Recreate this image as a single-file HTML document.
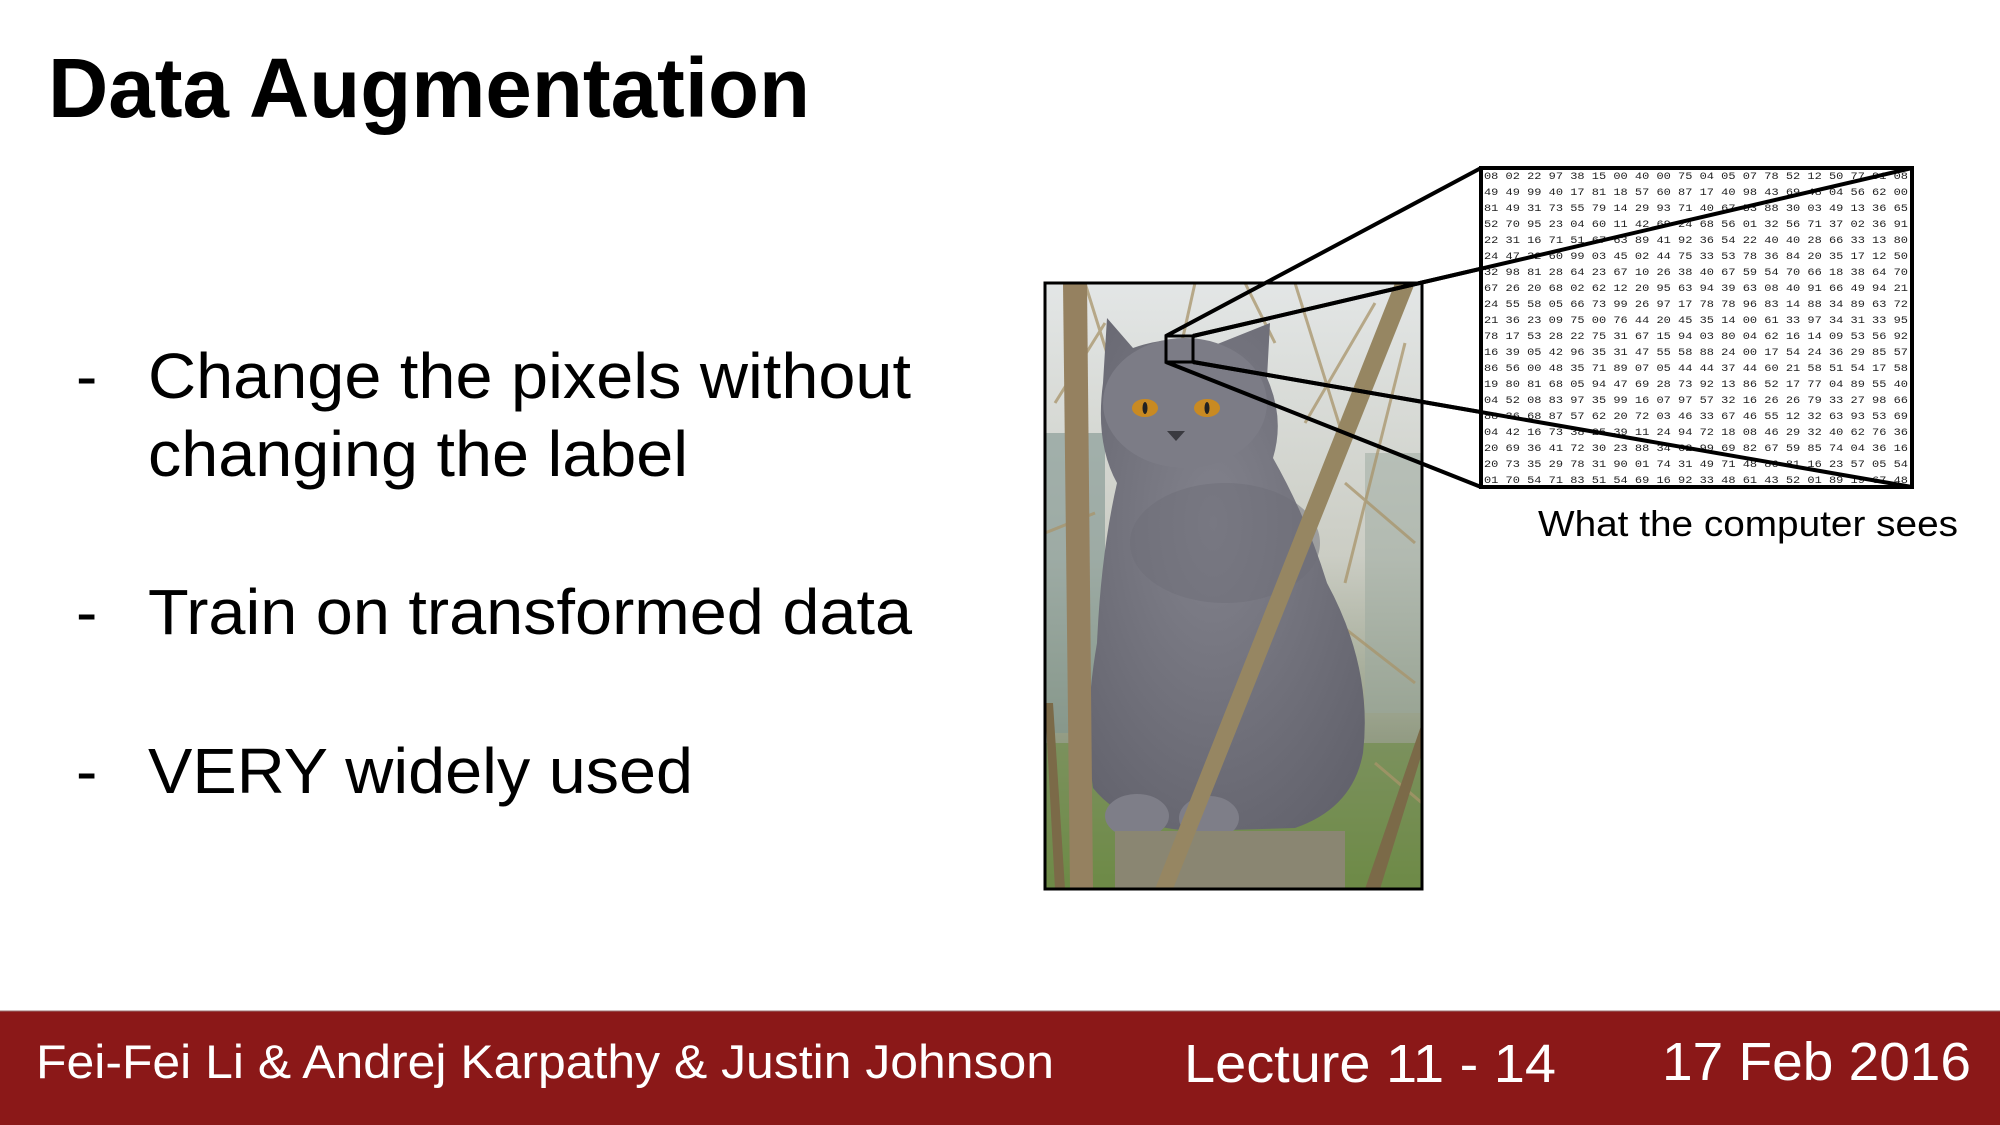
<!DOCTYPE html>
<html><head><meta charset="utf-8"><style>
html,body{margin:0;padding:0;background:#fff;}
body{width:2000px;height:1125px;overflow:hidden;position:relative;font-family:"Liberation Sans",Arial,sans-serif;}
</style></head><body>
<svg width="2000" height="1125" viewBox="0 0 2000 1125" xmlns="http://www.w3.org/2000/svg" style="position:absolute;left:0;top:0">
<rect width="2000" height="1125" fill="#fff"/>
<text x="48" y="117" font-family="Liberation Sans, Arial, sans-serif" font-weight="bold" font-size="84" fill="#000" textLength="762" lengthAdjust="spacingAndGlyphs">Data Augmentation</text>
<g font-family="Liberation Sans, Arial, sans-serif" font-size="64" fill="#000">
<text x="76" y="398">-</text>
<text x="148" y="398" textLength="763" lengthAdjust="spacingAndGlyphs">Change the pixels without</text>
<text x="148" y="476" textLength="540" lengthAdjust="spacingAndGlyphs">changing the label</text>
<text x="76" y="634">-</text>
<text x="148" y="634" textLength="764" lengthAdjust="spacingAndGlyphs">Train on transformed data</text>
<text x="76" y="793">-</text>
<text x="148" y="793" textLength="545" lengthAdjust="spacingAndGlyphs">VERY widely used</text>
</g>

<!-- cat photo -->
<svg x="1045" y="283" width="377" height="606" viewBox="0 0 377 606">
<defs>
<linearGradient id="bg" x1="0" y1="0" x2="0" y2="1">
<stop offset="0" stop-color="#e3e6e6"/><stop offset="0.45" stop-color="#cbcdc4"/><stop offset="0.75" stop-color="#939c84"/><stop offset="1" stop-color="#6f8a4a"/></linearGradient>
<radialGradient id="fur" cx="0.45" cy="0.4" r="0.7"><stop offset="0" stop-color="#82828c"/><stop offset="1" stop-color="#63636d"/></radialGradient>
</defs>
<rect width="377" height="606" fill="url(#bg)"/>
<rect x="0" y="150" width="60" height="300" fill="#7f9590" opacity="0.6"/>
<rect x="320" y="170" width="57" height="260" fill="#9aa89e" opacity="0.5"/>
<rect x="0" y="460" width="377" height="146" fill="#6d8a45" opacity="0.6"/>
<g stroke="#a8946a" stroke-width="3" fill="none" opacity="0.75">
<path d="M40 0 L90 160"/><path d="M150 0 L130 90"/><path d="M250 0 L300 160"/><path d="M330 20 L260 140"/><path d="M360 60 L300 300"/><path d="M200 0 L230 60"/><path d="M10 120 L60 40"/><path d="M300 200 L370 260"/><path d="M280 330 L370 400"/><path d="M0 250 L50 230"/><path d="M330 480 L377 520"/>
</g>
<!-- cat -->
<path d="M62 35 L88 65 Q130 50 170 62 L225 40 L222 95 Q240 135 228 175 Q262 235 282 300 Q328 385 318 470 Q308 525 250 545 L150 548 Q80 545 48 505 Q38 440 52 360 Q56 270 72 200 Q50 160 58 100 Z" fill="url(#fur)"/>
<ellipse cx="140" cy="120" rx="82" ry="65" fill="#7c7c86"/>
<ellipse cx="180" cy="260" rx="95" ry="60" fill="#6e6e78" opacity="0.5"/>
<ellipse cx="92" cy="533" rx="32" ry="22" fill="#7e7e88"/>
<ellipse cx="164" cy="535" rx="30" ry="22" fill="#7e7e88"/>
<ellipse cx="100" cy="125" rx="13" ry="9" fill="#c98a22"/>
<ellipse cx="162" cy="125" rx="13" ry="9" fill="#c98a22"/>
<ellipse cx="100" cy="125" rx="2.5" ry="6" fill="#222"/>
<ellipse cx="162" cy="125" rx="2.5" ry="6" fill="#222"/>
<path d="M122 148 L140 148 L131 158 Z" fill="#3a3a40"/>
<rect x="70" y="548" width="230" height="58" fill="#8a8672"/>
<!-- branches -->
<path d="M18 0 L42 0 L48 606 L25 606 Z" fill="#958160"/>
<path d="M110 606 L128 606 L370 0 L350 0 Z" fill="#968662"/>
<path d="M320 606 L335 606 L377 470 L377 440 Z" fill="#7b6a48"/>
<path d="M0 420 L8 420 L20 606 L10 606 Z" fill="#7b6a48"/>
</svg>
<rect x="1045" y="283" width="377" height="606" fill="none" stroke="#000" stroke-width="3"/>
<rect x="1166" y="336" width="27" height="26" fill="none" stroke="#000" stroke-width="3"/>
<g stroke="#000" stroke-width="4">
<line x1="1166" y1="336" x2="1481" y2="168"/>
<line x1="1193" y1="336" x2="1912" y2="168"/>
<line x1="1166" y1="362" x2="1481" y2="487"/>
<line x1="1193" y1="362" x2="1912" y2="487"/>
</g>

<!-- grid -->
<rect x="1481" y="168" width="431" height="319" fill="#fff"/>
<g font-family="Liberation Mono, monospace" font-size="10.5" fill="#222">
<text x="1484" y="179" textLength="424" lengthAdjust="spacingAndGlyphs">08 02 22 97 38 15 00 40 00 75 04 05 07 78 52 12 50 77 91 08</text>
<text x="1484" y="195" textLength="424" lengthAdjust="spacingAndGlyphs">49 49 99 40 17 81 18 57 60 87 17 40 98 43 69 48 04 56 62 00</text>
<text x="1484" y="211" textLength="424" lengthAdjust="spacingAndGlyphs">81 49 31 73 55 79 14 29 93 71 40 67 53 88 30 03 49 13 36 65</text>
<text x="1484" y="227" textLength="424" lengthAdjust="spacingAndGlyphs">52 70 95 23 04 60 11 42 69 24 68 56 01 32 56 71 37 02 36 91</text>
<text x="1484" y="243" textLength="424" lengthAdjust="spacingAndGlyphs">22 31 16 71 51 67 63 89 41 92 36 54 22 40 40 28 66 33 13 80</text>
<text x="1484" y="259" textLength="424" lengthAdjust="spacingAndGlyphs">24 47 32 60 99 03 45 02 44 75 33 53 78 36 84 20 35 17 12 50</text>
<text x="1484" y="275" textLength="424" lengthAdjust="spacingAndGlyphs">32 98 81 28 64 23 67 10 26 38 40 67 59 54 70 66 18 38 64 70</text>
<text x="1484" y="291" textLength="424" lengthAdjust="spacingAndGlyphs">67 26 20 68 02 62 12 20 95 63 94 39 63 08 40 91 66 49 94 21</text>
<text x="1484" y="307" textLength="424" lengthAdjust="spacingAndGlyphs">24 55 58 05 66 73 99 26 97 17 78 78 96 83 14 88 34 89 63 72</text>
<text x="1484" y="323" textLength="424" lengthAdjust="spacingAndGlyphs">21 36 23 09 75 00 76 44 20 45 35 14 00 61 33 97 34 31 33 95</text>
<text x="1484" y="339" textLength="424" lengthAdjust="spacingAndGlyphs">78 17 53 28 22 75 31 67 15 94 03 80 04 62 16 14 09 53 56 92</text>
<text x="1484" y="355" textLength="424" lengthAdjust="spacingAndGlyphs">16 39 05 42 96 35 31 47 55 58 88 24 00 17 54 24 36 29 85 57</text>
<text x="1484" y="371" textLength="424" lengthAdjust="spacingAndGlyphs">86 56 00 48 35 71 89 07 05 44 44 37 44 60 21 58 51 54 17 58</text>
<text x="1484" y="387" textLength="424" lengthAdjust="spacingAndGlyphs">19 80 81 68 05 94 47 69 28 73 92 13 86 52 17 77 04 89 55 40</text>
<text x="1484" y="403" textLength="424" lengthAdjust="spacingAndGlyphs">04 52 08 83 97 35 99 16 07 97 57 32 16 26 26 79 33 27 98 66</text>
<text x="1484" y="419" textLength="424" lengthAdjust="spacingAndGlyphs">88 36 68 87 57 62 20 72 03 46 33 67 46 55 12 32 63 93 53 69</text>
<text x="1484" y="435" textLength="424" lengthAdjust="spacingAndGlyphs">04 42 16 73 38 25 39 11 24 94 72 18 08 46 29 32 40 62 76 36</text>
<text x="1484" y="451" textLength="424" lengthAdjust="spacingAndGlyphs">20 69 36 41 72 30 23 88 34 62 99 69 82 67 59 85 74 04 36 16</text>
<text x="1484" y="467" textLength="424" lengthAdjust="spacingAndGlyphs">20 73 35 29 78 31 90 01 74 31 49 71 48 86 81 16 23 57 05 54</text>
<text x="1484" y="483" textLength="424" lengthAdjust="spacingAndGlyphs">01 70 54 71 83 51 54 69 16 92 33 48 61 43 52 01 89 19 67 48</text>
</g>
<rect x="1481" y="168" width="431" height="319" fill="none" stroke="#000" stroke-width="4"/>
<line x1="1193" y1="336" x2="1912" y2="168" stroke="#000" stroke-width="4"/>
<line x1="1193" y1="362" x2="1912" y2="487" stroke="#000" stroke-width="4"/>
<text x="1538" y="536" font-family="Liberation Sans, Arial, sans-serif" font-size="36" fill="#000" textLength="420" lengthAdjust="spacingAndGlyphs">What the computer sees</text>

<!-- footer -->
<rect x="0" y="1011" width="2000" height="114" fill="#8b1818"/>
<line x1="0" y1="1011" x2="2000" y2="1011" stroke="#9a7070" stroke-width="1"/>
<g font-family="Liberation Sans, Arial, sans-serif" fill="#fff">
<text x="36" y="1078" font-size="47" textLength="1018" lengthAdjust="spacingAndGlyphs">Fei-Fei Li &amp; Andrej Karpathy &amp; Justin Johnson</text>
<text x="1184" y="1082" font-size="54" textLength="372" lengthAdjust="spacingAndGlyphs">Lecture 11 - 14</text>
<text x="1662" y="1080" font-size="54" textLength="309" lengthAdjust="spacingAndGlyphs">17 Feb 2016</text>
</g>
</svg>
</body></html>
